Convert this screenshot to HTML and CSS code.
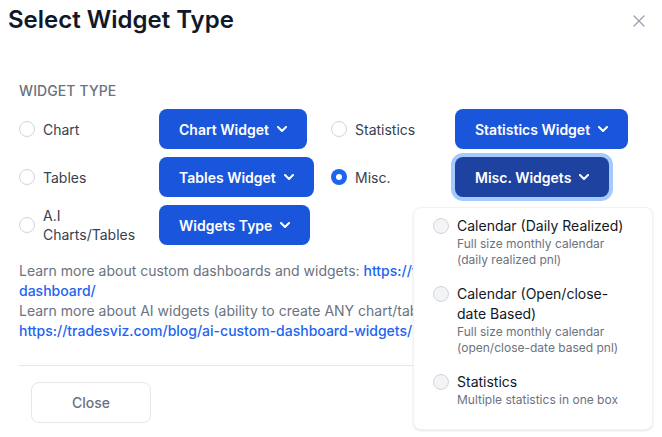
FILE: index.html
```html
<!DOCTYPE html>
<html lang="en">
<head>
<meta charset="utf-8">
<title>Select Widget Type</title>
<link rel="stylesheet" href="styles.css">
</head>
<body>
<div class="modal">
  <div class="modal-header">
    <h3 class="modal-title">Select Widget Type</h3>
    <button class="close-x" type="button" aria-label="Close">
      <svg width="12" height="12" viewBox="0 0 12 12" fill="none"><path d="M1 1l10 10M11 1L1 11" stroke="#9ca3af" stroke-width="1.4" stroke-linecap="round"/></svg>
    </button>
  </div>
  <div class="modal-body">
    <div class="section-label">WIDGET TYPE</div>
    <div class="type-grid">
      <label class="opt"><span class="radio"></span><span class="opt-text">Chart</span></label>
      <button class="btn-drop" type="button">Chart Widget<svg class="chev" viewBox="0 0 10 6" fill="none"><path d="m1 1 4 4 4-4" stroke="currentColor" stroke-width="2" stroke-linecap="round" stroke-linejoin="round"/></svg></button>
      <label class="opt"><span class="radio"></span><span class="opt-text">Statistics</span></label>
      <button class="btn-drop" type="button">Statistics Widget<svg class="chev" viewBox="0 0 10 6" fill="none"><path d="m1 1 4 4 4-4" stroke="currentColor" stroke-width="2" stroke-linecap="round" stroke-linejoin="round"/></svg></button>

      <label class="opt"><span class="radio"></span><span class="opt-text">Tables</span></label>
      <button class="btn-drop" type="button">Tables Widget<svg class="chev" viewBox="0 0 10 6" fill="none"><path d="m1 1 4 4 4-4" stroke="currentColor" stroke-width="2" stroke-linecap="round" stroke-linejoin="round"/></svg></button>
      <label class="opt"><span class="radio checked"></span><span class="opt-text">Misc.</span></label>
      <button class="btn-drop active" type="button">Misc. Widgets<svg class="chev" viewBox="0 0 10 6" fill="none"><path d="m1 1 4 4 4-4" stroke="currentColor" stroke-width="2" stroke-linecap="round" stroke-linejoin="round"/></svg></button>

      <label class="opt"><span class="radio"></span><span class="opt-text">A.I Charts/Tables</span></label>
      <button class="btn-drop" type="button">Widgets Type<svg class="chev" viewBox="0 0 10 6" fill="none"><path d="m1 1 4 4 4-4" stroke="currentColor" stroke-width="2" stroke-linecap="round" stroke-linejoin="round"/></svg></button>
    </div>
    <p class="info">Learn more about custom dashboards and widgets: <a href="#">https://tradesviz.com/blog/custom-dashboard/</a><br>Learn more about AI widgets (ability to create ANY chart/table using AI): <a href="#">https://tradesviz.com/blog/ai-custom-dashboard-widgets/</a></p>
  </div>
  <div class="modal-footer">
    <button class="btn-close" type="button">Close</button>
  </div>

  <div class="dropdown">
    <ul class="dd-list">
      <li class="dd-item">
        <span class="dd-radio-wrap"><span class="dd-radio"></span></span>
        <div class="dd-text">
          <div class="dd-title">Calendar (Daily Realized)</div>
          <p class="dd-desc">Full size monthly calendar (daily realized pnl)</p>
        </div>
      </li>
      <li class="dd-item">
        <span class="dd-radio-wrap"><span class="dd-radio"></span></span>
        <div class="dd-text">
          <div class="dd-title">Calendar (Open/close-date Based)</div>
          <p class="dd-desc">Full size monthly calendar (open/close-date based pnl)</p>
        </div>
      </li>
      <li class="dd-item">
        <span class="dd-radio-wrap"><span class="dd-radio"></span></span>
        <div class="dd-text">
          <div class="dd-title">Statistics</div>
          <p class="dd-desc">Multiple statistics in one box</p>
        </div>
      </li>
    </ul>
  </div>
</div>
</body>
</html>
```

FILE: styles.css
```css
* { box-sizing: border-box; }
html, body { margin: 0; padding: 0; background: #fff; }
body {
  font-family: Inter, "Noto Sans", "Liberation Sans", sans-serif;
  color: #111827;
  width: 662px;
  height: 437px;
  overflow: hidden;
}
.modal {
  position: relative;
  width: 662px;
  height: 437px;
}
.modal-header {
  display: flex;
  justify-content: space-between;
  align-items: flex-start;
  padding: 4px 17px 0 8px;
}
.modal-title {
  margin: 0;
  font-size: 24px;
  line-height: 32px;
  font-weight: 600;
  color: #111827;
}
.close-x {
  margin-top: 11px;
  padding: 0;
  border: 0;
  background: none;
  width: 12px;
  height: 12px;
  display: block;
}
.close-x svg { display: block; }

.modal-body {
  padding: 45px 19px 0 19px;
}
.section-label {
  font-size: 14px;
  line-height: 20px;
  font-weight: 500;
  color: #6b7280;
  letter-spacing: 0.1px;
}
.type-grid {
  margin-top: 8px;
  display: grid;
  grid-template-columns: 124px 156px 108px auto;
  grid-auto-rows: 40px;
  column-gap: 16px;
  row-gap: 8px;
  align-items: center;
  justify-items: start;
}
.opt {
  display: flex;
  align-items: center;
  gap: 8px;
  font-size: 14px;
  line-height: 19px;
  color: #374151;
}
.opt-text { max-width: 100px; }
.radio {
  flex: none;
  width: 16px;
  height: 16px;
  border-radius: 50%;
  border: 1px solid #d1d5db;
  background: #fff;
  position: relative;
}
.radio.checked {
  border: 0;
  background: #1c64f2;
}
.radio.checked::after {
  content: "";
  position: absolute;
  left: 5px;
  top: 5px;
  width: 6px;
  height: 6px;
  border-radius: 50%;
  background: #fff;
}
.btn-drop {
  display: inline-flex;
  align-items: center;
  height: 40px;
  padding: 0 20px;
  border: 0;
  border-radius: 8px;
  background: #1a56db;
  color: #fff;
  font-family: inherit;
  font-size: 14px;
  font-weight: 600;
  white-space: nowrap;
}
.btn-drop.active {
  background: #1e429f;
  box-shadow: 0 0 0 4px #a4cafe;
}
.chev {
  width: 10px;
  height: 6px;
  margin-left: 8px;
}
.info {
  margin: 16px 0 0 0;
  font-size: 14px;
  line-height: 20px;
  color: #6b7280;
}
.info a {
  color: #1c64f2;
  font-weight: 500;
  text-decoration: none;
}
.modal-footer {
  margin: 24px 19px 0 19px;
  border-top: 1px solid #e5e7eb;
  padding-top: 16px;
}
.btn-close {
  width: 120px;
  height: 41px;
  border: 1px solid #e5e7eb;
  border-radius: 8px;
  background: #fff;
  color: #6b7280;
  font-family: inherit;
  font-size: 14px;
  font-weight: 500;
  padding: 0;
  margin-left: 12px;
}

.dropdown {
  position: absolute;
  left: 413px;
  top: 207px;
  width: 240px;
  height: 223px;
  background: #fff;
  border: 1px solid #f1f2f4;
  border-radius: 8px;
  box-shadow: 0 1px 3px 0 rgba(0,0,0,0.08), 0 1px 2px -1px rgba(0,0,0,0.08);
}
.dd-list {
  list-style: none;
  margin: 0;
  padding: 0 11px 0 11px;
}
.dd-item {
  display: flex;
  padding: 8px;
}
.dd-radio-wrap {
  display: flex;
  align-items: center;
  height: 20px;
  flex: none;
}
.dd-radio {
  width: 16px;
  height: 16px;
  border-radius: 50%;
  border: 1px solid #d1d5db;
  background: #f3f4f6;
}
.dd-text {
  margin-left: 8px;
  font-size: 14px;
  line-height: 20px;
}
.dd-title {
  font-weight: 400;
  color: #111827;
}
.dd-desc {
  margin: 0;
  font-size: 12px;
  line-height: 16px;
  color: #6b7280;
}
```
